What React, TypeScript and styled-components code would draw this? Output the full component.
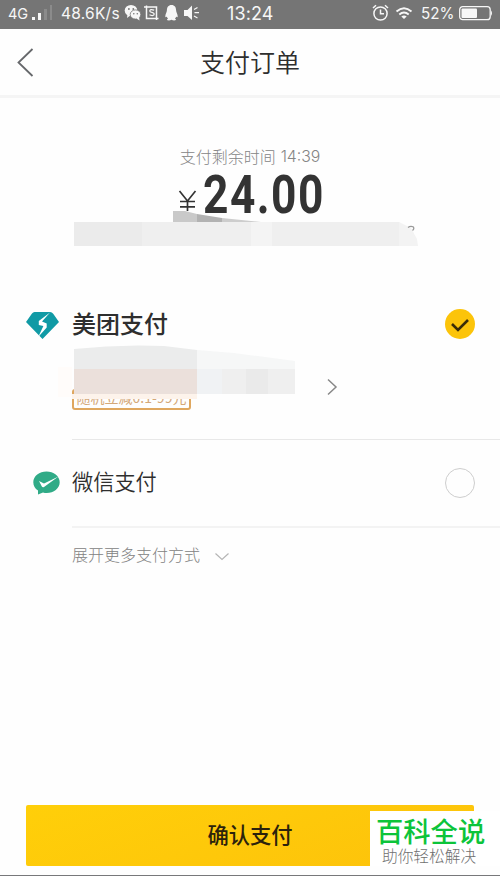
import React from "react";
import styled, { createGlobalStyle } from "styled-components";

const GlobalStyle = createGlobalStyle`
  * { box-sizing: border-box; }
  body { margin: 0; background: #fefefe; }
`;

const cjk = `"Noto Sans CJK SC", sans-serif`;

const Screen = styled.main`
  width: 500px;
  height: 876px;
  display: flex;
  flex-direction: column;
  overflow: hidden;
  background: #fefefe;
  border-bottom: 1px solid #77787a;
  font-family: ${cjk};
  color: #333;
`;

const StatusBar = styled.div`
  height: 29px;
  flex: none;
  display: grid;
  grid-template-columns: 227px 1fr auto;
  align-items: center;
  padding: 0 7px 3px 0;
  background: #757575;
  color: #f7f7f7;
  font-family: Inter, sans-serif;
`;

const StatusGroup = styled.div`
  display: flex;
  align-items: center;
`;

const StatusText = styled.span<{ $size: number; $width: number; $gap?: number; $spacing?: number }>`
  width: ${(p) => p.$width}px;
  margin-left: ${(p) => p.$gap ?? 0}px;
  padding-top: 1px;
  font-size: ${(p) => p.$size}px;
  letter-spacing: ${(p) => p.$spacing ?? 0}px;
  line-height: 25px;
  white-space: nowrap;
`;

const Glyph = styled.svg<{ $gap?: number }>`
  display: block;
  flex: none;
  margin-left: ${(p) => p.$gap ?? 0}px;
`;

const Header = styled.header`
  height: 69px;
  flex: none;
  display: grid;
  grid-template-columns: 60px 1fr 60px;
  align-items: center;
  border-bottom: 3px solid #f5f5f5;
`;

const Title = styled.h1`
  margin: 0;
  padding-bottom: 2px;
  text-align: center;
  font-size: 25px;
  font-weight: 350;
  line-height: 36px;
  color: #2e2e2e;
`;

const Summary = styled.section`
  position: relative;
  height: 196px;
  flex: none;
  padding-top: 47px;
  display: flex;
  flex-direction: column;
  align-items: center;
`;

const Countdown = styled.div`
  height: 22px;
  margin-bottom: 2px;
  display: flex;
  align-items: center;
  gap: 5px;
  line-height: 22px;
  font-size: 16px;
  font-weight: 300;
  color: #858585;
  white-space: nowrap;
`;

const Remaining = styled.span`
  padding-top: 1px;
  font-family: Inter, sans-serif;
  font-size: 15.8px;
  line-height: 21px;
`;

const Amount = styled.div`
  width: 145px;
  height: 56px;
  display: flex;
  align-items: flex-start;
`;

const Currency = styled.svg`
  flex: none;
  margin: 21px 6px 0 0;
`;

const Figure = styled.span`
  font-family: Roboto, sans-serif;
  font-size: 54px;
  font-weight: 700;
  line-height: 52px;
  letter-spacing: 1.8px;
  color: #333;
  transform: scaleX(0.82);
  transform-origin: left;
`;

const Smudge = styled.svg<{ $left: number; $top: number }>`
  position: absolute;
  left: ${(p) => p.$left}px;
  top: ${(p) => p.$top}px;
`;

const Method = styled.section<{ $height: number; $top: number }>`
  position: relative;
  height: ${(p) => p.$height}px;
  flex: none;
  display: grid;
  grid-template-columns: 72px 1fr 56px;
  align-items: start;
  padding-top: ${(p) => p.$top}px;
`;

const Logo = styled.div<{ $left: number; $top: number }>`
  padding: ${(p) => p.$top}px 0 0 ${(p) => p.$left}px;
`;

const MethodName = styled.h2<{ $bold?: boolean }>`
  margin: 0;
  font-size: ${(p) => (p.$bold ? 24 : 21.2)}px;
  font-weight: ${(p) => (p.$bold ? 500 : 350)};
  line-height: ${(p) => (p.$bold ? 34 : 32)}px;
  color: #2e2e2e;
`;

const Offer = styled.div`
  height: 70px;
  padding-top: 48px;
  display: flex;
  align-items: flex-end;
`;

const Coupon = styled.span`
  width: 119px;
  height: 21px;
  border: 2px solid #dfa75f;
  border-radius: 3px;
  color: #d4a878;
  font-size: 14px;
  line-height: 13px;
  text-align: center;
  white-space: nowrap;
`;

const OfferArrow = styled.svg`
  margin: 0 0 14px 135px;
`;

const Radio = styled.span<{ $checked?: boolean }>`
  width: 30px;
  height: 30px;
  margin: 3px 0 0 1px;
  border-radius: 50%;
  display: flex;
  align-items: center;
  justify-content: center;
  background: ${(p) => (p.$checked ? "#fcc40a" : "transparent")};
  border: ${(p) => (p.$checked ? "none" : "1.5px solid #cecece")};
`;

const Divider = styled.hr<{ $thick?: boolean }>`
  width: 428px;
  height: ${(p) => (p.$thick ? 2 : 1)}px;
  flex: none;
  margin: 0 0 0 72px;
  border: 0;
  background: ${(p) => (p.$thick ? "#f3f3f3" : "#e8e8e8")};
`;

const More = styled.button`
  height: 52px;
  display: flex;
  align-items: center;
  gap: 15px;
  padding: 0 0 0 72px;
  border: 0;
  background: none;
  font: 300 16px/24px ${cjk};
  color: #828282;
`;

const MoreArrow = styled.svg`
  margin: 5px 0 0 -1px;
`;

const Footer = styled.footer`
  position: relative;
  margin-top: auto;
  padding: 0 26px 9px;
`;

const Confirm = styled.button`
  width: 448px;
  height: 61px;
  display: block;
  padding: 0 0 3px;
  border: 0;
  border-radius: 2px;
  background: linear-gradient(160deg, #ffcf09, #fdc20b);
  font: 500 21.3px/58px ${cjk};
  color: #2b220c;
`;

const Watermark = styled.aside`
  position: absolute;
  left: 370px;
  top: 6px;
  width: 130px;
  height: 55px;
  padding: 2px 0 0 6px;
  background: #fff;
`;

const Brand = styled.div`
  height: 34px;
  font-size: 27.3px;
  font-weight: 500;
  line-height: 34px;
  color: #0cc43a;
  white-space: nowrap;
`;

const Slogan = styled.div`
  padding-left: 6px;
  font-size: 15.7px;
  font-weight: 300;
  line-height: 17px;
  color: #707070;
  white-space: nowrap;
`;

function StatusIcons() {
  return (
    <Glyph width="80" height="20" viewBox="0 0 80 20" $gap={4}>
      <g fill="#f7f7f7">
        <ellipse cx="7" cy="7.5" rx="6.3" ry="5.5" />
        <path d="M3.5 11 3 15l4-3z" />
        <ellipse cx="11.5" cy="11.5" rx="5.3" ry="4.6" stroke="#757575" strokeWidth=".8" />
        <path d="m12.5 15.5 3 2-.5-4z" />
        <path d="M47.500 2c3.200 0 4.600 2.400 4.600 5.300 0 2 1.600 3.600 1.600 6.200 0 1.200-1 .8-1.500.1-.3 1-.7 1.400-1.200 2 1.800 1.100.8 1.800-.7 1.800-1.200 0-2-.3-2.800-.7-.8.4-1.600.7-2.800.7-1.500 0-2.500-.7-.7-1.800-.5-.6-.9-1-1.200-2-.5.700-1.500 1.100-1.500-.100 0-2.600 1.600-4.200 1.600-6.200C42.900 4.400 44.300 2 47.500 2z" />
        <path d="M60 7h3.500l4.500-4.500v14.500L63.500 13H60z" />
      </g>
      <g fill="#757575">
        <circle cx="4.9" cy="6" r=".9" /><circle cx="9.3" cy="6" r=".9" />
        <circle cx="9.8" cy="10.7" r=".8" /><circle cx="13.3" cy="10.7" r=".8" />
      </g>
      <g fill="none" stroke="#f7f7f7" strokeWidth="1.5">
        <path d="M20 4h12.500v10.500M22.500 2.500v13h12M32.500 14v3" />
        <path d="M30.200 7.200q-4.400-1.500-4.400.8c0 1.800 4.400 1 4.400 3 0 2.200-3.400 1.600-4.700.8" strokeWidth="1.3" />
        <path d="M70 6.500l3.500-2M70.500 9.700H75M70 13l3.500 2" strokeWidth="1.2" />
      </g>
    </Glyph>
  );
}

export default function App() {
  return (
    <>
      <GlobalStyle />
      <Screen>
        <StatusBar>
          <StatusGroup>
            <StatusText $size={14.5} $width={21} $gap={8}>4G</StatusText>
            <Glyph width="22" height="16" viewBox="0 0 22 16" $gap={3}>
              <path d="M0 12h3v3H0zM6 8h3v7H6z" fill="#f7f7f7" />
              <path d="M12 4h3v11h-3zM18 0h2v15h-2z" fill="#8b8b8b" />
            </Glyph>
            <StatusText $size={15.5} $width={59} $gap={7} $spacing={0.25}>48.6K/s</StatusText>
            <StatusIcons />
          </StatusGroup>
          <StatusText $size={18} $width={48} $spacing={0.1}>13:24</StatusText>
          <StatusGroup>
            <Glyph width="17" height="18" viewBox="0 0 17 18" fill="none" stroke="#f7f7f7" strokeWidth="1.5">
              <circle cx="8.5" cy="9.5" r="6.6" />
              <path d="M8.5 5.500v4.300H12M1 4l3-2.800M16 4l-3-2.800" />
            </Glyph>
            <Glyph width="18" height="14" viewBox="0 0 18 14" fill="none" stroke="#f7f7f7" strokeWidth="1.9" $gap={6}>
              <path d="M1.500 5.500q7.500-6.500 15 0M4.300 8.500q4.700-4 9.400 0" />
              <path d="M6.300 10.500q2.700-2 5.400 0L9 13z" fill="#f7f7f7" stroke="none" />
            </Glyph>
            <StatusText $size={15.2} $width={33} $gap={8}>52%</StatusText>
            <Glyph width="34" height="15" viewBox="0 0 34 15" $gap={5}>
              <rect x=".7" y=".7" width="30.5" height="13" rx="3" fill="none" stroke="#f7f7f7" strokeWidth="1.3" />
              <rect x="2.5" y="2.5" width="15.5" height="9.5" rx="1" fill="#f7f7f7" />
              <path d="M32 4.500q2 2.700 0 5.400z" fill="#f7f7f7" />
            </Glyph>
          </StatusGroup>
        </StatusBar>

        <Header>
          <Glyph width="17" height="29" viewBox="0 0 17 29" $gap={17}>
            <path d="M15.500 1 1.500 14.500l14 13.500" fill="none" stroke="#66686b" strokeWidth="1.8" />
          </Glyph>
          <Title>支付订单</Title>
        </Header>

        <Summary>
          <Countdown>支付剩余时间<Remaining>14:39</Remaining></Countdown>
          <Amount>
            <Currency width="19" height="22" viewBox="0 0 19 22" fill="none" stroke="#333" strokeWidth="1.7">
              <path d="M1.500 1 9.500 11 17.500 1M9.500 11v10M2 11.500h15M2 16.800h15" />
            </Currency>
            <Figure>24.00</Figure>
          </Amount>
          <Smudge width="360" height="38" viewBox="0 0 360 38" $left={73} $top={111}>
            <path d="M100 2h12l12 3v8h-24z" fill="#c9c9c9" />
            <path d="M124 5l25 4v4h-25z" fill="#b2b2b2" />
            <path d="M149 9l39 4h-39z" fill="#cdcdcd" />
            <path d="M1 13h325l15 17 4 7H1z" fill="#efefef" />
            <path d="M1 13h68v24H1z" fill="#ebebeb" />
            <path d="M178 13h21v24h-21z" fill="#f4f4f4" />
            <path d="M326 13l12 6 6 11 1 7h-19z" fill="#f3f3f3" />
            <path d="M335 18.500q2.500-2 5.500-.5 1 2-1 3.500" fill="none" stroke="#999" strokeWidth="1.2" />
          </Smudge>
        </Summary>

        <Method $height={145} $top={12}>
          <Logo $left={26} $top={5}>
            <Glyph width="33" height="28" viewBox="0 0 33 28">
              <path d="M8.500 1h15.500q2 0 3.200 1.700L33 11 16.500 28 0 11 6 2.500Q7 1 8.500 1z" fill="#109aa5" />
              <path d="M24 1.500 12.800 10v4l4.600 1-5.200 11 8.500-9.500v-4l-4.700-2z" fill="#fff" />
            </Glyph>
          </Logo>
          <div>
            <MethodName $bold>美团支付</MethodName>
            <Offer>
              <Coupon>随机立减0.1-99元</Coupon>
              <OfferArrow width="12" height="18" viewBox="0 0 12 18" fill="none" stroke="#888" strokeWidth="1.5">
                <path d="m2 1.500 8 7.500-8 7.500" />
              </OfferArrow>
            </Offer>
          </div>
          <Radio $checked>
            <Glyph width="20" height="16" viewBox="0 0 20 16">
              <path d="m2 8 6 6L18 4" fill="none" stroke="#3a2c08" strokeWidth="2.6" />
            </Glyph>
          </Radio>
          <Smudge width="250" height="70" viewBox="0 0 250 70" $left={58} $top={47}>
            <path d="M0 26h14v30H0z" fill="#fffcfa" />
            <path d="M16 8q45-5 90-3l33 4v19H16z" fill="#ebecec" />
            <path d="M139 9l37 3 61 8v8h-98z" fill="#f6f7f7" />
            <path d="M16 28h123v25H16z" fill="#ebe0db" />
            <path d="M14 53h125v5H14z" fill="#fdf3eb" />
            <path d="M139 28h98v25h-98z" fill="#efefef" />
            <path d="M139 28h25v25h-25z" fill="#f0f2f4" />
            <path d="M188 28h22v25h-22z" fill="#eaeaea" />
          </Smudge>
        </Method>
        <Divider />

        <Method $height={86} $top={25}>
          <Logo $left={33} $top={6}>
            <Glyph width="27" height="24" viewBox="0 0 27 24">
              <path d="M13.500.5C6.500.5.3 5 .3 11.300c0 3.700 1.800 6.300 4.700 8.200L5 23.500l5-2.100q1.800.6 3.700.6c7 0 13-4.500 13-10.700C26.700 5 20.500.5 13.500.5z" fill="#30ab87" />
              <path d="m6 10 5 2.500L25.500 5.500 11 16q-1.500.8-2.300-.8z" fill="#fff" />
            </Glyph>
          </Logo>
          <MethodName>微信支付</MethodName>
          <Radio />
        </Method>
        <Divider $thick />

        <More>
          展开更多支付方式
          <MoreArrow width="16" height="10" viewBox="0 0 16 10">
            <path d="m1.500 1.500 6.500 6 6.500-6" fill="none" stroke="#b5b5b5" strokeWidth="1.2" />
          </MoreArrow>
        </More>

        <Footer>
          <Confirm>确认支付</Confirm>
          <Watermark>
            <Brand>百科全说</Brand>
            <Slogan>助你轻松解决</Slogan>
          </Watermark>
        </Footer>
      </Screen>
    </>
  );
}
